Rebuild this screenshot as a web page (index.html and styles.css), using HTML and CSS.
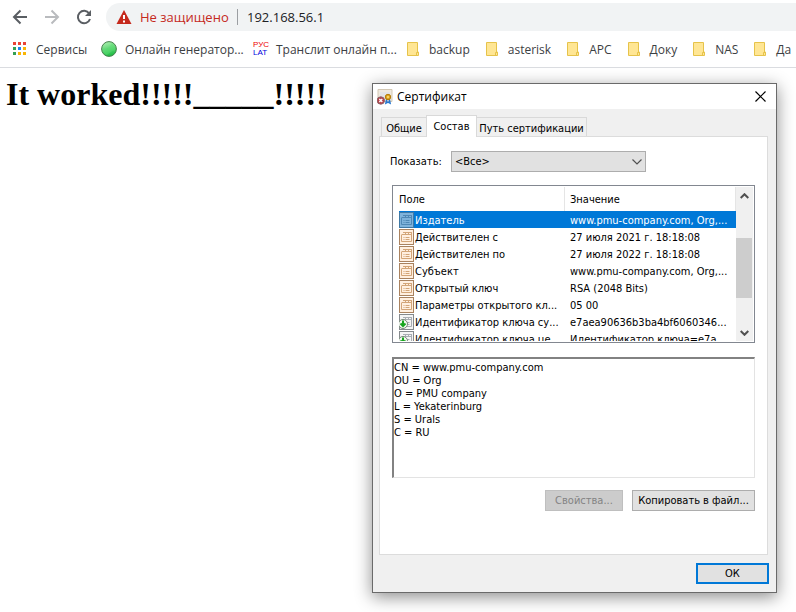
FILE: index.html
```html
<!DOCTYPE html>
<html lang="ru">
<head>
<meta charset="utf-8">
<title>192.168.56.1</title>
<link rel="stylesheet" href="styles.css">
</head>
<body>
<svg class="defs" aria-hidden="true">
  <symbol id="folder" viewBox="0 0 13 14">
    <path d="M.5.5h10v9.500h1v3.500H.5z" fill="#ffe694" stroke="#e6c34a"/>
    <path d="M9.500 13V10.500h2V13" fill="#ffe694" stroke="#e6c34a"/>
  </symbol>
  <symbol id="field" viewBox="0 0 16 16">
    <path class="sheet" d="M.5.5h14v15H.5z"/>
    <path class="frame" d="M0 .5h15M.5 0v16M0 15.500h15M14.500 0v16"/>
    <path class="form" d="M3 5.500h9.500v7H2.500v-7M4 3.500h2M7 3.500h2M10 3.500h2M6.500 3v2M9.500 3v2M12.500 3v3M4.500 8.500h1M6.500 8.500h4M4.500 10.500h1M6.500 10.500h4"/>
  </symbol>
  <symbol id="arrow" viewBox="0 0 16 16">
    <circle cx="4" cy="10" r="4.500" fill="#f4faf2" stroke="#758a76"/>
    <path d="M4 6.500V12M1.500 9.500L4 12l2.500-2.500" fill="none" stroke="#17a51e" stroke-width="2"/>
  </symbol>
</svg>
<header class="browser">
  <div class="toolbar">
    <button class="nav" aria-label="Назад"><svg width="16" height="16" viewBox="0 0 16 16"><path d="M15 8H2M8.500 1.500L2 8l6.500 6.500" fill="none" stroke="#5a5e63" stroke-width="2"/></svg></button>
    <button class="nav" aria-label="Вперёд" disabled><svg width="16" height="16" viewBox="0 0 16 16"><path d="M1 8h13M7.500 1.500L14 8l-6.500 6.500" fill="none" stroke="#b9bbbe" stroke-width="2"/></svg></button>
    <button class="nav" aria-label="Обновить"><svg width="16" height="16" viewBox="0 0 16 16"><path d="M13.200 4.500A6.200 6.200 0 1 0 14 10" fill="none" stroke="#5a5e63" stroke-width="2"/><path d="M15 1v6H9z" fill="#5a5e63"/></svg></button>
    <div class="address">
      <svg width="16" height="14" viewBox="0 0 16 14"><path d="M8 0l7.500 14H.5z" fill="#c5291c"/><path d="M7 5h2v4H7zM7 10.500h2v2H7z" fill="#fff"/></svg>
      <span class="warning">Не защищено</span>
      <span class="url">192.168.56.1</span>
    </div>
  </div>
  <nav class="bookmarks">
    <a href="#"><svg width="14" height="14" viewBox="0 0 14 14"><path d="M0 0h3v3H0zM5 0h3v3H5zM10 0h3v3h-3z" fill="#ea4335"/><path d="M0 5h3v3H0zM0 10h3v3H0z" fill="#34a053"/><path d="M5 5h3v3H5z" fill="#1a84f0"/><path d="M10 5h3v3h-3zM5 10h3v3H5zM10 10h3v3h-3z" fill="#f9b505"/></svg><span class="apps">Сервисы</span></a>
    <a href="#"><svg width="16" height="16" viewBox="0 0 16 16"><defs><linearGradient id="ball" x2=".3" y2="1"><stop stop-color="#b7f5b8"/><stop offset="1" stop-color="#22be47"/></linearGradient></defs><circle cx="8" cy="8" r="7.400" fill="url(#ball)" stroke="#49814f"/><path d="M2 7c4 2 7-1 9-5 3 2 3.500 5 3 8-3-2-6 4-9 4C3 12 2 10 2 7z" fill="#5bdd70" opacity=".45"/></svg><span class="generator">Онлайн генератор...</span></a>
    <a href="#"><span class="translit-icon" aria-hidden="true"><span>РУС</span><span>LAT</span></span><span class="translit">Транслит онлайн п...</span></a>
    <a href="#"><svg class="folder"><use href="#folder"/></svg>backup</a>
    <a href="#"><svg class="folder"><use href="#folder"/></svg>asterisk</a>
    <a href="#"><svg class="folder"><use href="#folder"/></svg>АРС</a>
    <a href="#"><svg class="folder"><use href="#folder"/></svg>Доку</a>
    <a href="#"><svg class="folder"><use href="#folder"/></svg>NAS</a>
    <a href="#"><svg class="folder"><use href="#folder"/></svg>Да</a>
  </nav>
</header>
<main><h1>It worked!!!!!_____!!!!!</h1></main>

<section class="dialog" role="dialog" aria-labelledby="caption">
  <header class="titlebar">
    <svg width="16" height="16" viewBox="0 0 16 16"><path d="M1 .5h14v12H1z" fill="#eee9df" stroke="#d2c7b3"/><path d="M3 3h10v7H3z" fill="#e3e4e5"/><path d="M10 9l-1 5 2-1M12 9l1 5-2-1" fill="none" stroke="#2878d0" stroke-width="1.600"/><circle cx="11" cy="8" r="2.700" fill="#dda51c" stroke="#b57b0a"/><circle cx="11" cy="8" r="1" fill="#ffe07a"/><circle cx="3.800" cy="11.500" r="3.700" fill="#b83f48" stroke="#8c6469"/><path d="M2.300 10l3 3m0-3l-3 3" stroke="#fff" stroke-width="1.400"/></svg>
    <h2 id="caption">Сертификат</h2>
    <button class="close" aria-label="Закрыть"><svg width="11" height="11" viewBox="0 0 11 11"><path d="M.5.5l10 10m0-10l-10 10" stroke="#000" stroke-width="1.200"/></svg></button>
  </header>
  <div class="content">
    <div class="tabs" role="tablist">
      <button role="tab" aria-selected="false">Общие</button>
      <button role="tab" aria-selected="true">Состав</button>
      <button role="tab" aria-selected="false">Путь сертификации</button>
    </div>
    <div class="panel" role="tabpanel">
      <div class="filter">
        <label for="show">Показать:</label>
        <div class="combo">
          <select id="show"><option>&lt;Все&gt;</option></select>
          <svg width="10" height="6" viewBox="0 0 10 6"><path d="M.5.5L5 5 9.500.5" fill="none" stroke="#505050" stroke-width="1.200"/></svg>
        </div>
      </div>
      <div class="list">
        <div class="rows">
          <table>
            <thead><tr><th>Поле</th><th>Значение</th></tr></thead>
            <tbody>
              <tr class="selected"><td><svg class="icon"><use href="#field"/></svg>Издатель</td><td>www.pmu-company.com, Org,...</td></tr>
              <tr><td><svg class="icon"><use href="#field"/></svg>Действителен с</td><td>27 июля 2021 г. 18:18:08</td></tr>
              <tr><td><svg class="icon"><use href="#field"/></svg>Действителен по</td><td>27 июля 2022 г. 18:18:08</td></tr>
              <tr><td><svg class="icon"><use href="#field"/></svg>Субъект</td><td>www.pmu-company.com, Org,...</td></tr>
              <tr><td><svg class="icon"><use href="#field"/></svg>Открытый ключ</td><td>RSA (2048 Bits)</td></tr>
              <tr><td><svg class="icon"><use href="#field"/></svg>Параметры открытого кл...</td><td>05 00</td></tr>
              <tr class="extension"><td><svg class="icon"><use href="#field"/><use href="#arrow"/></svg>Идентификатор ключа су...</td><td>e7aea90636b3ba4bf6060346...</td></tr>
              <tr class="extension"><td><svg class="icon"><use href="#field"/><use href="#arrow"/></svg>Идентификатор ключа це</td><td>Идентификатор ключа=e7a</td></tr>
            </tbody>
          </table>
        </div>
        <div class="scrollbar">
          <button aria-label="Вверх"><svg width="9" height="6" viewBox="0 0 9 6"><path d="M.7 5L4.500 1.200 8.300 5" fill="none" stroke="#505050" stroke-width="2"/></svg></button>
          <div class="track"><div class="thumb"></div></div>
          <button aria-label="Вниз"><svg width="9" height="6" viewBox="0 0 9 6"><path d="M.7 1L4.500 4.800 8.300 1" fill="none" stroke="#505050" stroke-width="2"/></svg></button>
        </div>
      </div>
      <textarea class="details" aria-label="Значение поля" readonly>CN = www.pmu-company.com
OU = Org
O = PMU company
L = Yekaterinburg
S = Urals
C = RU</textarea>
      <div class="actions">
        <button class="push properties" disabled>Свойства...</button>
        <button class="push copy">Копировать в файл...</button>
      </div>
    </div>
    <div class="footer"><button class="push default">ОК</button></div>
  </div>
</section>
</body>
</html>
```
FILE: styles.css
```css
* { box-sizing: border-box; }
body { margin: 0; min-height: 100vh; background: #fff; overflow: hidden; }
button, select, textarea { font: inherit; color: inherit; margin: 0; border-radius: 0; }
svg { display: block; flex: none; }
.defs { position: absolute; width: 0; height: 0; }

.browser { border-bottom: 1px solid #dadce0; font-family: "Open Sans", sans-serif; }
.toolbar { display: flex; padding: 3px 0 3px 12px; height: 34px; }
.nav { display: flex; align-items: center; width: 32px; padding: 0; border: 0; background: none; }
.nav:nth-child(3) { width: 30px; }
.address { display: flex; align-items: center; flex: 1; height: 28px; padding-left: 10px; border-radius: 14px 0 0 14px; background: #f1f3f4; font-size: 13px; line-height: 18px; }
.warning { width: 97px; margin-left: 8px; color: #c5291c; white-space: nowrap; }
.url { padding-left: 9px; border-left: 1px solid #9b9ea2; line-height: 16px; color: #202124; }
.bookmarks { display: flex; height: 33px; padding: 0 0 3px 13px; gap: 16px; overflow: hidden; }
.bookmarks a { display: flex; align-items: center; flex: none; color: #3c4043; font-size: 12px; text-decoration: none; white-space: nowrap; }
.folder { width: 13px; height: 14px; margin-right: 9px; }
.apps { width: 49px; margin-left: 9px; }
.generator { width: 112px; margin-left: 8px; }
.translit { width: 115px; margin-left: 8px; }
.translit-icon { width: 15px; font: 8px/8px "Liberation Sans", sans-serif; color: #e00; }
.translit-icon span { display: block; }
.translit-icon span + span { color: #00d; }

main { padding: 8px 6px; }
h1 { margin: 0; font: bold 32px/37px "Liberation Serif", serif; color: #000; }

.dialog { position: absolute; left: 372px; top: 83px; width: 405px; border: 1px solid #6a6a6a; background: #f0f0f0; box-shadow: 0 4px 16px rgba(0, 0, 0, .45); font: 11px/13px "DejaVu Sans Condensed", "DejaVu Sans", sans-serif; color: #000; }
.titlebar { display: flex; align-items: center; height: 25px; padding-left: 4px; background: #fff; }
.titlebar h2 { flex: 1; margin: 0 0 0 4px; font: 12px/16px "Open Sans", sans-serif; }
.close { display: grid; place-items: center; width: 31px; height: 25px; padding: 0; border: 0; background: none; }
.content { padding: 6px 8px 8px 6px; }
.tabs { display: flex; align-items: flex-end; padding-left: 2px; }
.tabs button { height: 19px; padding: 2px 4px 0; border: 1px solid #d9d9d9; border-bottom: 0; background: #f0f0f0; white-space: nowrap; }
.tabs button:nth-child(1) { width: 45px; border-right: 0; }
.tabs button:nth-child(2) { width: 51px; height: 22px; margin-bottom: -1px; padding: 0; background: #fff; position: relative; }
.tabs button:nth-child(3) { width: 110px; padding: 2px 0 0; border-left: 0; }
.panel { min-height: 419px; padding: 14px 12px; border: 1px solid #dcdcdc; background: #fff; }
.filter { display: flex; align-items: center; padding-bottom: 13px; margin-left: -2px; }
.filter label { width: 61px; }
.combo { position: relative; width: 195px; }
.combo select { display: block; width: 100%; height: 21px; padding: 0 3px; border: 1px solid #adadad; background: #e1e1e1; appearance: none; }
.combo svg { position: absolute; right: 4px; top: 8px; pointer-events: none; }

.list { display: flex; height: 158px; padding: 1px; border: 1px solid #828790; }
.rows { flex: 1; min-width: 0; overflow: hidden; }
table { width: 100%; border-spacing: 0; table-layout: fixed; }
th { height: 24px; padding: 0 5px; font-weight: normal; text-align: left; border-right: 1px solid #e5e5e5; }
th:first-child { width: 171px; }
td { height: 17px; padding: 1px 0 0 5px; white-space: nowrap; overflow: hidden; }
td:first-child { display: flex; align-items: center; }
.icon { width: 16px; height: 16px; --sheet: #ffefe0; --frame: #a9825f; --form: #d3a578; }
.sheet { fill: var(--sheet); }
.frame { fill: none; stroke: var(--frame); }
.form { fill: none; stroke: var(--form); }
.selected td { background: #0078d7; color: #fff; }
.selected td:first-child { background: linear-gradient(#0078d7, #0078d7) 5px 0 no-repeat; }
.selected .icon { --sheet: #7fb3db; --frame: #3f79a5; --form: #4f88b5; }
.extension .icon { --sheet: #f4f4f4; --frame: #85898d; --form: #a9adb3; }
.scrollbar { display: flex; flex-direction: column; width: 17px; background: #f0f0f0; }
.scrollbar button { display: grid; place-items: center; height: 17px; padding: 0; border: 0; background: none; }
.track { flex: 1; padding-top: 34px; }
.thumb { height: 60px; margin-right: 1px; background: #cdcdcd; }

.details { display: block; width: 100%; height: 121px; margin-top: 14px; padding: 2px 0; border: 2px solid; border-color: #828282 #e3e3e3 #e3e3e3 #828282; border-right-width: 1px; border-bottom-width: 1px; background: #fff; resize: none; outline: 0; overflow: hidden; }
.actions { display: flex; justify-content: flex-end; gap: 9px; margin-top: 12px; }
.push { height: 21px; padding: 0; border: 1px solid #adadad; background: #e1e1e1; white-space: nowrap; }
.properties { width: 78px; }
.properties:disabled { border-color: #bfbfbf; background: #ccc; color: #838383; }
.copy { width: 123px; }
.footer { display: flex; justify-content: flex-end; margin: 8px -1px 0 0; }
.default { width: 73px; border: 2px solid #0078d7; }
```
